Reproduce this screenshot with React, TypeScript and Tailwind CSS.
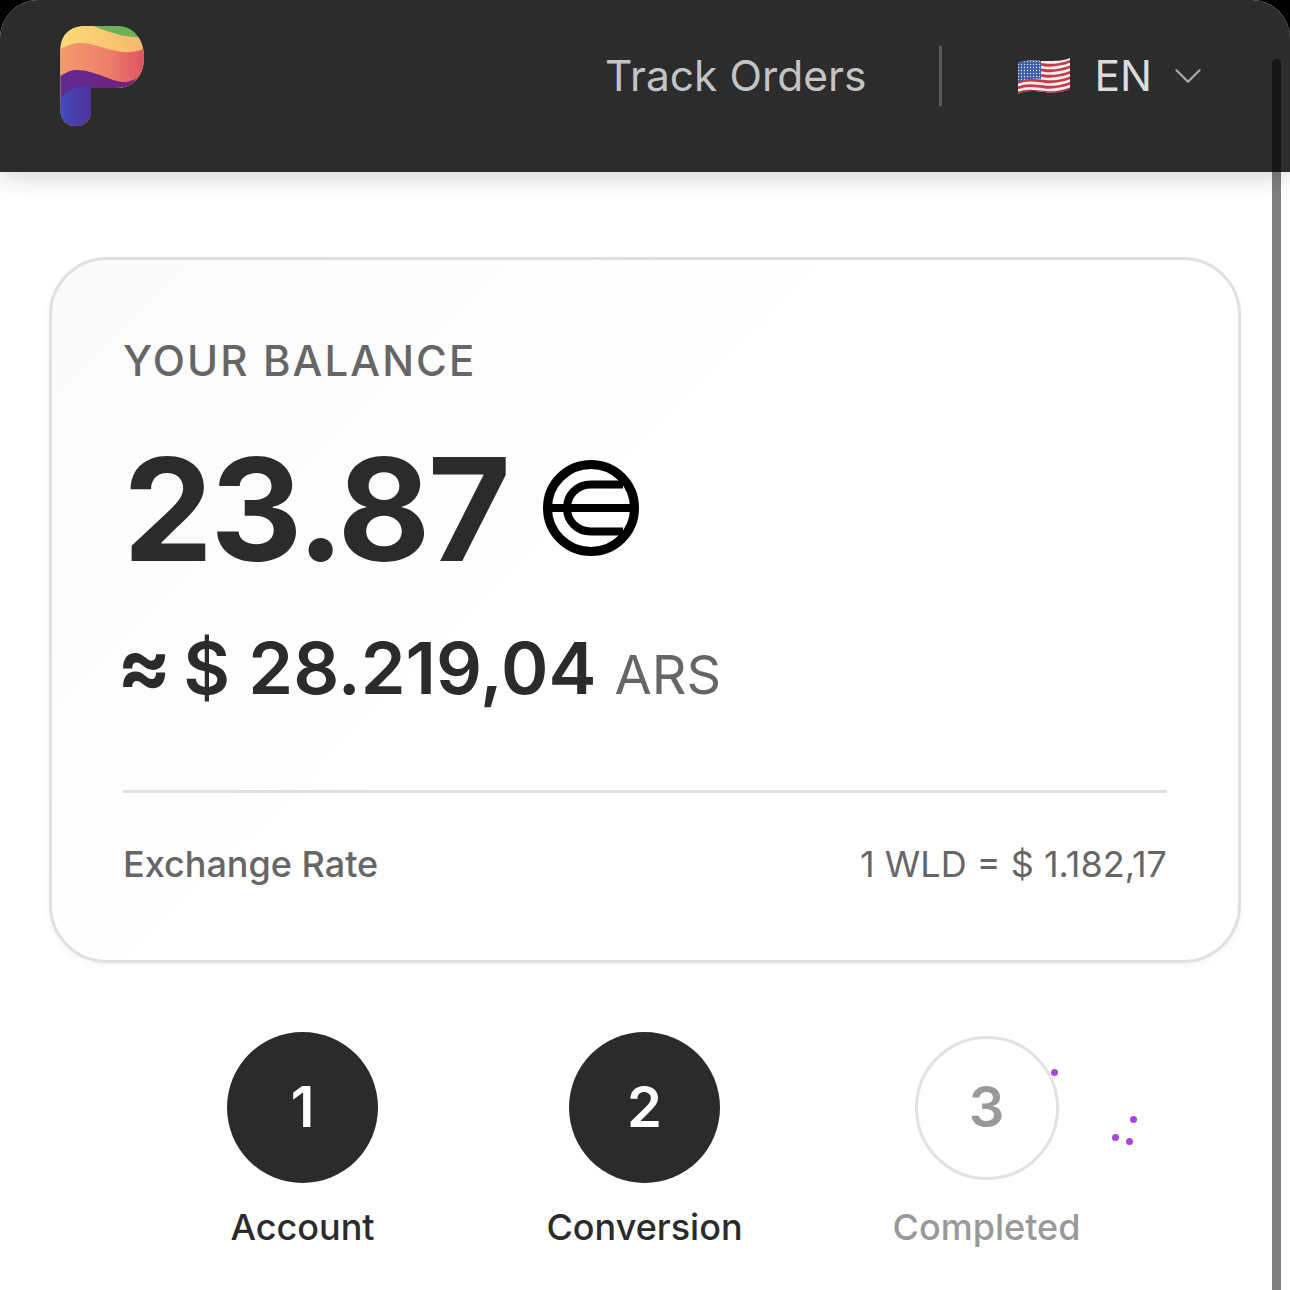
import { ChevronDown } from "lucide-react";

const Logo = () => (
  <svg width="86" height="102" viewBox="0 0 86 102" className="block">
    <defs>
      <clipPath id="p-shape">
        <path d="M0.500 24C0.500 9 10 0 25 0H58C74 0 84 14 84 31C84 49 74 62 56 62H31V84C31 94 25 100 16 100C7 100 0.500 94 0.500 84Z" />
      </clipPath>
      <linearGradient id="coral" x1="0" x2="1" y1="0" y2="0">
        <stop offset="0" stopColor="#f59a70" />
        <stop offset="0.55" stopColor="#ec8069" />
        <stop offset="1" stopColor="#dc4a60" />
      </linearGradient>
      <linearGradient id="band" x1="0" x2="1" y1="0" y2="0">
        <stop offset="0" stopColor="#fadc78" />
        <stop offset="1" stopColor="#f8b56e" />
      </linearGradient>
      <linearGradient id="violet" x1="0" x2="1" y1="0" y2="0">
        <stop offset="0" stopColor="#5e2a92" />
        <stop offset="1" stopColor="#7a1f78" />
      </linearGradient>
      <linearGradient id="blue" x1="0" x2="1" y1="0" y2="0">
        <stop offset="0" stopColor="#3f4fbf" />
        <stop offset="1" stopColor="#52309a" />
      </linearGradient>
    </defs>
    <g clipPath="url(#p-shape)">
      <rect width="86" height="102" fill="#6bb25a" />
      <path d="M-2 -2H28C40 2 52 9 74 11L90 12V110H-2Z" fill="url(#band)" />
      <path d="M-2 24C6 20 12 17 20 17C32 17 42 22 53 24C62 27 74 28 90 20V110H-2Z" fill="url(#coral)" />
      <path d="M-2 52C5 47 10 44 17 44C26 44 33 47 40 49C50 53 58 56 63 56C70 56 74 54 90 46V110H-2Z" fill="url(#violet)" />
      <path d="M-2 80C0 70 8 61 32 58V110H-2Z" fill="url(#blue)" />
    </g>
  </svg>
);

const UsFlag = () => (
  <svg width="54" height="38" viewBox="0 0 54 38" className="block">
    <defs>
      <clipPath id="flag-wave">
        <path d="M1 6C12 2 18 4 28 4C38 4 46 4 53 1V32C44 36 36 36 27 35C17 34 10 33 1 37Z" />
      </clipPath>
      <pattern id="stars" width="3" height="3" patternUnits="userSpaceOnUse">
        <circle cx="1.500" cy="1.500" r="0.700" fill="#dfe6f7" />
      </pattern>
    </defs>
    <g clipPath="url(#flag-wave)">
      <rect width="54" height="38" fill="#f4f0f0" />
      <path d="M0 9C12 5 18 7 28 8C38 9 46 7 54 4" stroke="#c93a45" strokeWidth="2.8" fill="none" />
      <path d="M0 14.500C12 10.500 18 12.500 28 13.500C38 14.500 46 12.500 54 9.500" stroke="#c93a45" strokeWidth="2.8" fill="none" />
      <path d="M0 20C12 16 18 18 28 19C38 20 46 18 54 15" stroke="#c93a45" strokeWidth="2.8" fill="none" />
      <path d="M0 25.500C12 21.500 18 23.500 28 24.500C38 25.500 46 23.500 54 20.500" stroke="#c93a45" strokeWidth="2.8" fill="none" />
      <path d="M0 31C12 27 18 29 28 30C38 31 46 29 54 26" stroke="#c93a45" strokeWidth="2.8" fill="none" />
      <path d="M0 36.500C12 32.500 18 34.500 28 35.500C38 36.500 46 34.500 54 31.500" stroke="#a92c3a" strokeWidth="2.800" fill="none" />
      <path d="M0 3H24V22C14 21 8 22 0 25Z" fill="#3f5aa8" />
      <path d="M0 3H24V22C14 21 8 22 0 25Z" fill="url(#stars)" />
    </g>
  </svg>
);

const WorldcoinMark = () => (
  <svg width="96" height="96" viewBox="0 0 96 96" className="block">
    <circle cx="48" cy="48" r="43.500" fill="none" stroke="#000" strokeWidth="9" />
    <path d="M80 24.500H48C34 24.500 24 35 24 48C24 61 34 71.500 48 71.500H80" fill="none" stroke="#000" strokeWidth="8" />
    <path d="M6 48H90" stroke="#000" strokeWidth="8" />
  </svg>
);

const steps = [
  { n: "1", label: "Account", done: true },
  { n: "2", label: "Conversion", done: true },
  { n: "3", label: "Completed", done: false },
];

export default function App() {
  return (
    <div className="relative h-[1290px] w-[1290px] overflow-hidden bg-black font-['Inter',sans-serif]">
      <div className="h-full rounded-t-[38px] bg-white">
        <header className="flex h-[172px] items-center rounded-t-[38px] bg-[#2d2c2d] pr-[79px] pl-[60px] shadow-[0_6px_24px_rgba(0,0,0,0.16)]">
          <div className="mb-[18px]">
            <Logo />
          </div>
          <nav className="mb-[20px] ml-auto flex items-center">
            <span className="text-[42.500px] leading-none text-[#c4c4c4]">Track Orders</span>
            <span className="mr-[75px] ml-[73px] h-[60px] w-[3px] bg-[#5a5a5a]" />
            <UsFlag />
            <span className="ml-[23px] text-[42.500px] leading-none text-[#dcdcdc]">EN</span>
            <ChevronDown className="ml-[13px]" color="#a8a8a8" size={46} strokeWidth={1.2} />
          </nav>
        </header>

        <main className="px-[49px] pt-[85px]">
          <section className="flex h-[706px] w-[1192px] flex-col rounded-[58px] border-[3px] border-[#e0e0e0] bg-[linear-gradient(135deg,#fafafa_0%,#ffffff_45%)] px-[71px] pt-[76px] shadow-[0_2px_6px_rgba(0,0,0,0.05)]">
            <p className="text-[42px] leading-[50px] font-medium tracking-[0.05em] text-[#666666]">YOUR BALANCE</p>
            <div className="mt-[47px] flex h-[150px] items-center">
              <span className="text-[143px] leading-none font-bold tracking-[-0.02em] text-[#2b2b2b]">23.87</span>
              <span className="ml-[35px]">
                <WorldcoinMark />
              </span>
            </div>
            <div className="mt-[42px] flex h-[90px] items-baseline text-[#2b2b2b]">
              <span className="-ml-[6px] text-[80px] leading-none font-bold">≈</span>
              <span className="ml-[12px] text-[72px] leading-none font-semibold">$ 28.219,04</span>
              <span className="ml-[18px] text-[54px] leading-none text-[#666666]">ARS</span>
            </div>
            <div className="mt-[75px] h-[3px] bg-[#e0e0e0]" />
            <div className="mt-[49px] flex items-center justify-between text-[36px] leading-[44px] text-[#666666]">
              <span className="font-medium">Exchange Rate</span>
              <span>1 WLD = $ 1.182,17</span>
            </div>
          </section>

          <ol className="mt-[69px] -ml-[1px] flex justify-center">
            {steps.map((s) => (
              <li key={s.n} className="flex w-[342px] flex-col items-center">
                <div className="flex h-[151px] items-center justify-center">
                  {s.done ? (
                    <div className="flex h-[151px] w-[151px] items-center justify-center rounded-full bg-[#2b2b2b] pb-[2px] text-[56px] font-semibold text-white">
                      {s.n}
                    </div>
                  ) : (
                    <div className="flex h-[144px] w-[144px] items-center justify-center rounded-full border-[3px] border-[#e2e2e2] pb-[2px] text-[56px] font-semibold text-[#999999]">
                      {s.n}
                    </div>
                  )}
                </div>
                <span className={`mt-[22px] text-[36px] leading-[44px] font-medium ${s.done ? "text-[#2b2b2b]" : "text-[#999999]"}`}>
                  {s.label}
                </span>
              </li>
            ))}
          </ol>
        </main>
      </div>

      {/* confetti dots */}
      <span className="absolute top-[1069px] left-[1051px] h-[7px] w-[7px] rounded-full bg-[#a845e0]" />
      <span className="absolute top-[1116px] left-[1130px] h-[7px] w-[7px] rounded-full bg-[#a845e0]" />
      <span className="absolute top-[1134px] left-[1112px] h-[7px] w-[7px] rounded-full bg-[#a845e0]" />
      <span className="absolute top-[1138px] left-[1126px] h-[7px] w-[7px] rounded-full bg-[#a845e0]" />

      {/* scrollbar */}
      <div className="absolute top-[59px] right-[9px] h-[1240px] w-[9px] rounded-t-[4px] bg-[rgba(0,0,0,0.5)]" />
    </div>
  );
}
